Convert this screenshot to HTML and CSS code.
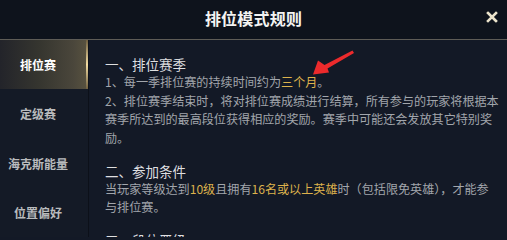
FILE: index.html
```html
<!DOCTYPE html>
<html lang="zh-CN">
<head>
<meta charset="utf-8">
<title>排位模式规则</title>
<link rel="stylesheet" href="styles.css">
</head>
<body>
<div class="dialog">
  <header class="header">
    <span></span>
    <h1 class="title">排位模式规则</h1>
    <button class="close" aria-label="关闭">
      <svg width="12" height="12" viewBox="0 0 12 12"><path d="M2 2 L10 10 M10 2 L2 10" stroke="#ece4cc" stroke-width="2.6" stroke-linecap="square"/></svg>
    </button>
  </header>
  <div class="main">
    <nav class="sidebar">
      <div class="tab active">排位赛</div>
      <div class="tab">定级赛</div>
      <div class="tab">海克斯能量</div>
      <div class="tab">位置偏好</div>
    </nav>
    <section class="content">
      <div class="block">
        <h2 class="heading">一、排位赛季</h2>
        <p class="text">1、每一季排位赛的持续时间约为<span class="hl">三个月</span>。<br>2、排位赛季结束时，将对排位赛成绩进行结算，所有参与的玩家将根据本<br>赛季所达到的最高段位获得相应的奖励。赛季中可能还会发放其它特别奖<br>励。</p>
      </div>
      <div class="block">
        <h2 class="heading">二、参加条件</h2>
        <p class="text">当玩家等级达到<span class="hl">10级</span>且拥有<span class="hl">16名或以上英雄</span>时（包括限免英雄），才能参<br>与排位赛。</p>
      </div>
      <div class="block">
        <h2 class="heading">三、段位晋级</h2>
      </div>
      <svg class="arrow" width="48" height="34" viewBox="0 0 48 34">
        <polygon points="42.5,3.5 44,6 17.5,21.5 19,25.5 3,27.5 8,13.5 14.5,18" fill="#ec2a2c"/>
      </svg>
    </section>
  </div>
</div>
</body>
</html>
```
FILE: styles.css
```css
* { box-sizing: border-box; }
html, body {
  margin: 0;
  padding: 0;
  background: #131926;
}
body {
  width: 507px;
  height: 237px;
  overflow: hidden;
  font-family: "Noto Sans CJK SC", "Noto Sans", sans-serif;
}
.dialog {
  display: flex;
  flex-direction: column;
  height: 237px;
}
.header {
  height: 40px;
  flex: none;
  display: grid;
  grid-template-columns: 1fr auto 1fr;
  align-items: center;
  background: #0e131c;
  border-bottom: 1px solid #5e5c56;
}
.title {
  margin: 0;
  font-size: 16px;
  font-weight: 700;
  color: #f4f4f2;
  line-height: 20px;
  padding-bottom: 3px;
  letter-spacing: 0.2px;
}
.close {
  justify-self: end;
  margin-right: 9px;
  margin-bottom: 6px;
  width: 12px;
  height: 12px;
  padding: 0;
  border: 0;
  background: none;
  display: flex;
}
.main {
  flex: 1;
  display: flex;
  min-height: 0;
}
.sidebar {
  width: 89px;
  flex: none;
  background: #141a26;
  border-right: 1px solid #0c1019;
  display: flex;
  flex-direction: column;
}
.tab {
  height: 49.5px;
  display: flex;
  align-items: center;
  justify-content: center;
  font-size: 12px;
  font-weight: 700;
  color: #b9bbbd;
  padding-right: 12px;
}
.tab.active {
  color: #ffffff;
  background: linear-gradient(to right, #23242a 0%, #35352f 45%, #4a463b 85%, #57513f 100%);
  border-right: 2px solid;
  border-image: linear-gradient(to bottom, #6a5a3c, #f3dca2 50%, #6a5a3c) 1;
  padding-right: 10px;
}
.content {
  flex: 1;
  position: relative;
  background: #131926;
  padding: 15px 0 0 16px;
  white-space: nowrap;
}
.block {
  margin-bottom: 14.6px;
}
.heading {
  margin: 0;
  font-size: 13.5px;
  font-weight: 400;
  line-height: 18.4px;
  color: #dedfe0;
}
.text {
  margin: 0;
  font-size: 12.1px;
  line-height: 18.4px;
  color: #a2a6ac;
}
.hl {
  color: #ddb24c;
}
.arrow {
  position: absolute;
  left: 221px;
  top: 7px;
}
```
